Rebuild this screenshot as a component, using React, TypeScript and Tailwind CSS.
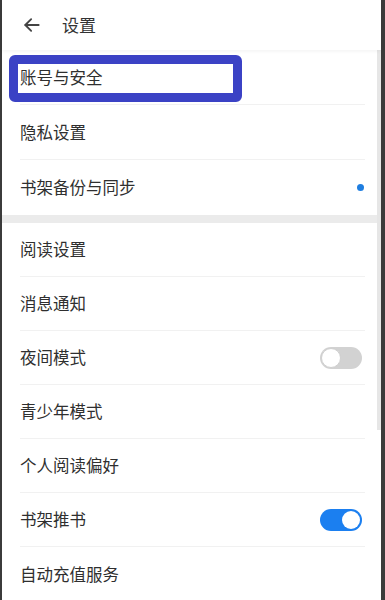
import React from "react";

type Row = {
  label: string;
  dot?: boolean;
  toggle?: "on" | "off";
  boxed?: boolean;
};

const groupA: Row[] = [
  { label: "账号与安全", boxed: true },
  { label: "隐私设置" },
  { label: "书架备份与同步", dot: true },
];

const groupB: Row[] = [
  { label: "阅读设置" },
  { label: "消息通知" },
  { label: "夜间模式", toggle: "off" },
  { label: "青少年模式" },
  { label: "个人阅读偏好" },
  { label: "书架推书", toggle: "on" },
  { label: "自动充值服务" },
];

function Toggle({ on }: { on: boolean }) {
  return on ? (
    <div className="w-[42px] h-[22px] mr-[3px] rounded-full bg-[#1b7ff0] flex items-center justify-end pr-[2px]">
      <div className="w-[18px] h-[18px] rounded-full bg-white" />
    </div>
  ) : (
    <div className="w-[42px] h-[22px] mr-[3px] rounded-full bg-[#d2d2d2] flex items-center pl-[1px]">
      <div className="w-[20px] h-[20px] rounded-full bg-white border border-[#d0d0d0]" />
    </div>
  );
}

function SettingRow({ row, last, tall }: { row: Row; last?: boolean; tall?: boolean }) {
  return (
    <div className="relative pl-[18px] pr-[12px]">
      <div
        className={`${tall ? "h-[55px]" : "h-[54px]"} flex items-center justify-between ${
          last ? "" : "border-b border-[#f1f1f1]"
        }`}
      >
        <span className="text-[16.5px] text-[#2f2f2f]">{row.label}</span>
        {row.dot ? (
          <div className="w-[7px] h-[7px] rounded-full bg-[#1f7ee0] mr-[1px]" />
        ) : null}
        {row.toggle ? <Toggle on={row.toggle === "on"} /> : null}
      </div>
      {row.boxed ? (
        <div className="absolute left-[7px] top-[5px] w-[233px] h-[47px] rounded-[6px] border-[9px] border-[#3b42c5]" />
      ) : null}
    </div>
  );
}

export default function App() {
  return (
    <div
      className="h-[600px] flex bg-[#3b3b3b] pl-[2px] pr-[4px] overflow-hidden"
      style={{ fontFamily: '"Noto Sans CJK SC", "Noto Sans", sans-serif' }}
    >
      <div className="flex-1 flex flex-col bg-white">
        <div className="h-[50px] shrink-0 flex items-center gap-[20px] pl-[20px] shadow-[0_1px_4px_rgba(0,0,0,0.06)] z-10">
          <svg width="20" height="20" viewBox="0 0 24 24" fill="none" stroke="#444" strokeWidth="2.2" strokeLinecap="round" strokeLinejoin="round">
            <path d="M20 12H4" />
            <path d="M11 5l-7 7 7 7" />
          </svg>
          <span className="text-[17px] text-[#333]">设置</span>
        </div>
        <div className="flex-1 flex">
          <div className="flex-1 flex flex-col">
            {groupA.map((r, i) => (
              <SettingRow key={r.label} row={r} tall last={i === groupA.length - 1} />
            ))}
            <div className="h-[8px] bg-[#ebebeb]" />
            {groupB.map((r, i) => (
              <SettingRow key={r.label} row={r} last={i === groupB.length - 1} />
            ))}
          </div>
          <div className="w-[4px] flex flex-col">
            <div className="h-[380px] bg-[#e6e6e6]" />
          </div>
        </div>
      </div>
    </div>
  );
}
